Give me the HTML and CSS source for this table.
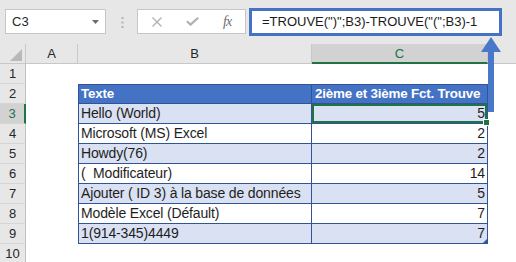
FILE: index.html
```html
<!DOCTYPE html>
<html lang="fr">
<head>
  <meta charset="UTF-8" />
  <meta name="viewport" content="width=device-width, initial-scale=1.0" />
  <title>TROUVE</title>
  <link rel="stylesheet" href="styles.css">
</head>
<body>
  <div class="toolbar">
    <div class="namebox">
      <span>C3</span>
      <svg width="7" height="4" viewBox="0 0 7 4"><polygon points="0,0 7,0 3.5,4" fill="#6b6b6b"/></svg>
    </div>
    <svg class="grip" width="3" height="12" viewBox="0 0 3 12">
      <rect x="0.5" y="0" width="2" height="2" fill="#b3b3b3"/>
      <rect x="0.5" y="4.5" width="2" height="2" fill="#b3b3b3"/>
      <rect x="0.5" y="9" width="2" height="2" fill="#b3b3b3"/>
    </svg>
    <div class="fxbox">
      <svg width="10" height="10" viewBox="0 0 10 10"><path d="M0.5 0.5 L9.5 9.5 M9.5 0.5 L0.5 9.5" stroke="#b0b0b0" stroke-width="1.3" fill="none"/></svg>
      <svg width="13" height="9" viewBox="0 0 13 9"><path d="M0.8 4.2 L4.6 7.6 L12.2 0.8" stroke="#b0b0b0" stroke-width="2.2" fill="none"/></svg>
      <span class="fx">fx</span>
    </div>
    <div class="formula">=TROUVE(")";B3)-TROUVE("(";B3)-1</div>
  </div>

  <div class="sheet">
    <div class="corner"><svg width="26" height="20" viewBox="0 0 26 20"><polygon points="22,5 22,17 10,17" fill="#b8b8b8"/></svg></div>
    <div class="colhead">A</div>
    <div class="colhead">B</div>
    <div class="colhead active">C</div>
    <div class="colhead last"></div>

    <div class="rowhead">1</div>
    <div></div><div></div><div></div><div></div>

    <div class="rowhead">2</div>
    <div></div>
    <div class="t txt head">Texte</div>
    <div class="t head">2ième et 3ième Fct. Trouve</div>
    <div></div>

    <div class="rowhead active">3</div>
    <div></div>
    <div class="t txt band">Hello (World)</div>
    <div class="t num band sel">5</div>
    <div></div>

    <div class="rowhead">4</div>
    <div></div>
    <div class="t txt">Microsoft (MS) Excel</div>
    <div class="t num">2</div>
    <div></div>

    <div class="rowhead">5</div>
    <div></div>
    <div class="t txt band">Howdy(76)</div>
    <div class="t num band">2</div>
    <div></div>

    <div class="rowhead">6</div>
    <div></div>
    <div class="t txt">(&nbsp; Modificateur)</div>
    <div class="t num">14</div>
    <div></div>

    <div class="rowhead">7</div>
    <div></div>
    <div class="t txt band">Ajouter ( ID 3) à la base de données</div>
    <div class="t num band">5</div>
    <div></div>

    <div class="rowhead">8</div>
    <div></div>
    <div class="t txt">Modèle Excel (Défault)</div>
    <div class="t num">7</div>
    <div></div>

    <div class="rowhead">9</div>
    <div></div>
    <div class="t txt band">1(914-345)4449</div>
    <div class="t num band corner-mark">7</div>
    <div></div>

    <div class="rowhead">10</div>
    <div></div><div></div><div></div><div></div>
  </div>

  <!-- pointer from the result column up to the formula bar -->
  <svg class="arrow" width="22" height="78" viewBox="0 0 22 78">
    <polygon points="1,16 11,1 21,16 14,16 14,76 8,76 8,16" fill="#4a78c8"/>
  </svg>
</body>
</html>
```

FILE: styles.css
```css
body {
  margin: 0;
  width: 516px;
  height: 262px;
  overflow: hidden;
  position: relative;
  background: #fff;
  font-family: "Liberation Sans", Arial, sans-serif;
  color: #1e1e1e;
}

/* formula bar */
.toolbar {
  display: flex;
  align-items: flex-start;
  height: 44px;
  box-sizing: border-box;
  padding: 9px 0 0 5px;
  background: #e7e7e7;
}

.namebox {
  width: 101px;
  height: 25px;
  box-sizing: border-box;
  border: 1px solid #c6c6c6;
  background: #fff;
  display: flex;
  align-items: center;
  justify-content: space-between;
  padding: 0 6px 0 6px;
  font-size: 13px;
  color: #262626;
}

.grip {
  margin: 8px 0 0 15px;
}

.fxbox {
  margin-left: 13px;
  width: 109px;
  height: 25px;
  box-sizing: border-box;
  border: 1px solid #c6c6c6;
  background: #fff;
  display: flex;
  align-items: center;
  gap: 24px;
  padding-left: 14px;
}

.fx {
  font-family: "Liberation Serif", "Times New Roman", serif;
  font-style: italic;
  font-size: 14px;
  color: #6e6e6e;
  letter-spacing: -1px;
}

.formula {
  margin: -1px 0 0 3px;
  width: 253px;
  height: 28px;
  box-sizing: border-box;
  border: 3px solid #4472c4;
  background: #fff;
  padding-left: 10px;
  font-size: 13px;
  line-height: 22px;
  color: #1a1a1a;
  white-space: nowrap;
}

/* grid */
.sheet {
  display: grid;
  grid-template-columns: 26px 52px 234px 176px 1fr;
  grid-auto-rows: 20px;
}

.corner {
  background: #e7e7e7;
  border-right: 1px solid #c8c8c8;
  border-bottom: 1px solid #c8c8c8;
  box-sizing: border-box;
}

.corner svg {
  display: block;
}

.colhead {
  background: #e7e7e7;
  border-right: 1px solid #c8c8c8;
  border-bottom: 1px solid #c8c8c8;
  box-sizing: border-box;
  text-align: center;
  font-size: 13px;
  line-height: 20px;
  color: #262626;
}

.colhead.active {
  background: #d2d2d2;
  border-bottom: 2px solid #217346;
  color: #217346;
}

.colhead.last {
  border-right: none;
}

.rowhead {
  background: #e7e7e7;
  border-right: 1px solid #c0c0c0;
  border-bottom: 1px solid #d5d5d5;
  box-sizing: border-box;
  text-align: center;
  font-size: 13px;
  line-height: 19px;
  color: #262626;
}

.rowhead.active {
  background: #d2d2d2;
  border-right: 2px solid #217346;
  color: #217346;
}

/* table */
.t {
  box-sizing: border-box;
  border-right: 1px solid #2f5597;
  border-bottom: 1px solid #2f5597;
  padding: 0 2px 0 3px;
  font-size: 14px;
  letter-spacing: -0.15px;
  line-height: 19px;
  white-space: nowrap;
}

.t.txt {
  border-left: 1px solid #2f5597;
  padding-left: 2px;
}

.t.num {
  text-align: right;
}

.t.head {
  background: #4472c4;
  border-top: 1px solid #2f5597;
  color: #fff;
  font-size: 13.4px;
  font-weight: bold;
  letter-spacing: -0.2px;
  line-height: 18px;
}

.band {
  background: #d9e1f2;
}

.sel {
  position: relative;
  box-shadow: inset 0 0 0 2px #217346;
}

.sel::after {
  content: "";
  position: absolute;
  right: -3px;
  bottom: -3px;
  width: 5px;
  height: 5px;
  background: #217346;
  border: 1px solid #fff;
}

.corner-mark {
  position: relative;
}

.corner-mark::after {
  content: "";
  position: absolute;
  right: 0;
  bottom: 0;
  border-style: solid;
  border-width: 0 0 4px 4px;
  border-color: transparent transparent #2f5597 transparent;
}

.arrow {
  position: absolute;
  left: 480px;
  top: 36px;
}
```
